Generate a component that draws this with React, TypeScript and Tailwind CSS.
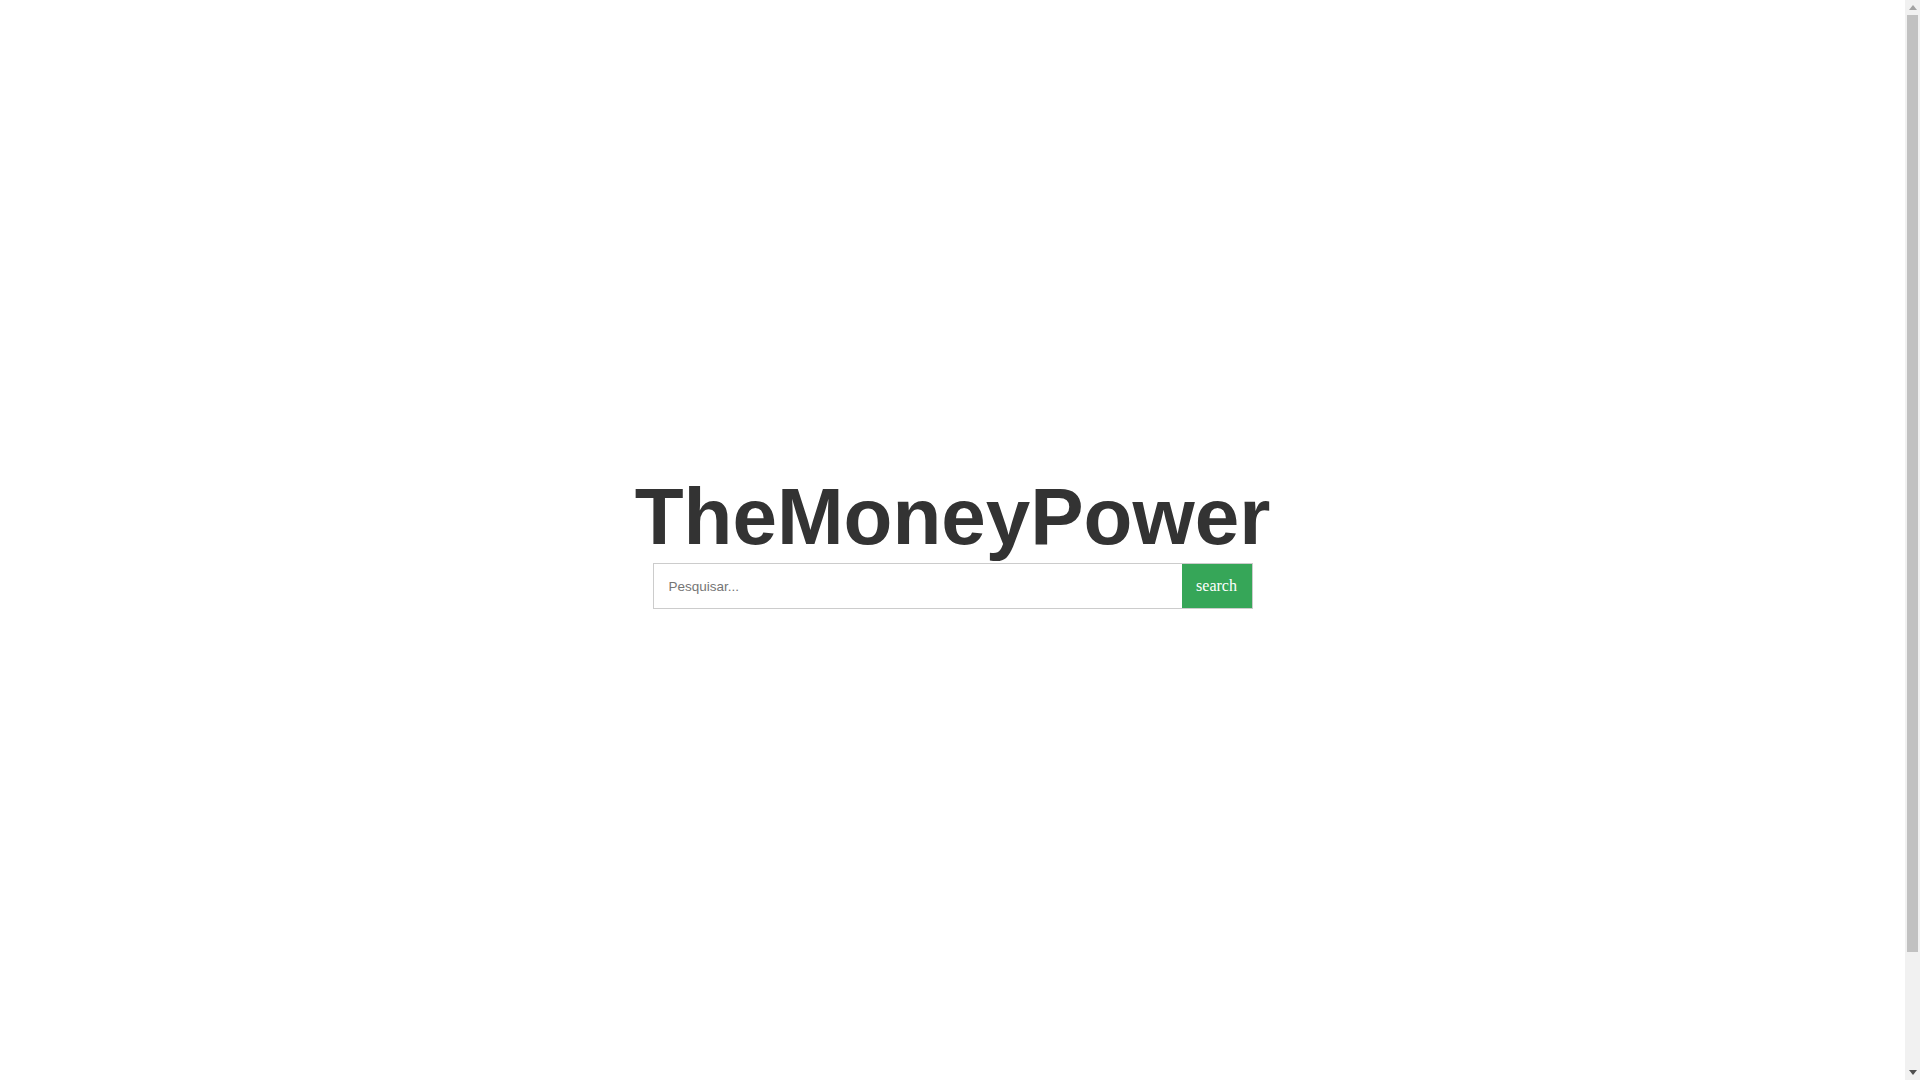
import React from "react";

function FakeScrollbar() {
  return (
    <div className="fixed top-0 right-0 w-[15px] h-[1080px] bg-[#f1f1f1] flex flex-col items-center">
      <div className="h-[15px] w-full flex items-center justify-center">
        <svg width="8" height="5" viewBox="0 0 8 5">
          <polygon points="4,0 8,5 0,5" fill="#a3a3a3" />
        </svg>
      </div>
      <div className="w-[11px] h-[937px] bg-[#c1c1c1]" />
      <div className="flex-1" />
      <div className="h-[15px] w-full flex items-center justify-center">
        <svg width="8" height="5" viewBox="0 0 8 5">
          <polygon points="0,0 8,0 4,5" fill="#505050" />
        </svg>
      </div>
    </div>
  );
}

export default function App() {
  return (
    <div className="h-[1080px] overflow-hidden bg-white">
      <div
        className="w-[1905px] min-h-[1210px] bg-white flex flex-col items-center pt-[477px]"
        style={{ fontFamily: '"Liberation Sans", Arial, sans-serif' }}
      >
        <h1 className="text-[80px] leading-[80px] font-bold text-[#333333] mb-[6px] font-['Liberation_Sans',Arial,sans-serif]">
          TheMoneyPower
        </h1>
        <form
          className="flex w-[600px] h-[46px] border border-[#cccccc]"
          onSubmit={(e) => e.preventDefault()}
        >
          <input
            type="text"
            placeholder="Pesquisar..."
            className="flex-1 min-w-0 h-full px-[15px] text-[13.5px] text-[#333] placeholder:text-[#757575] outline-none bg-white font-['Liberation_Sans',Arial,sans-serif]"
          />
          <button
            type="submit"
            className="w-[70px] h-full bg-[#36a658] text-white text-[16px] font-['Liberation_Serif','Times_New_Roman',serif]"
          >
            search
          </button>
        </form>
      </div>
      <FakeScrollbar />
    </div>
  );
}
